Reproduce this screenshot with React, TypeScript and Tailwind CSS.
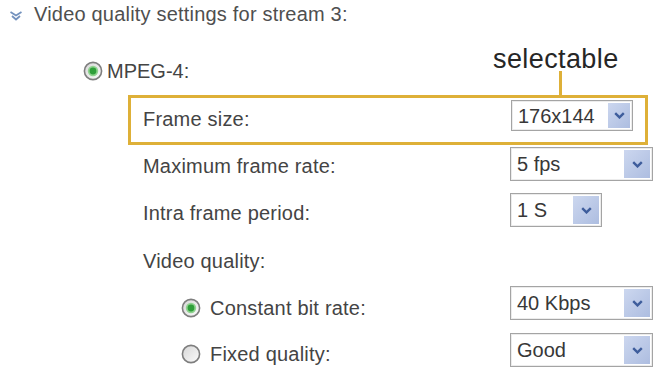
const Radio = ({ checked }: { checked?: boolean }) => (
    <svg width="20" height="20" viewBox="0 0 20 20">
        <defs>
            <linearGradient id={checked ? 'rg-on' : 'rg-off'} x1="0" y1="0" x2="1" y2="1">
                <stop offset="0" stopColor="#d6d6d6" />
                <stop offset="1" stopColor="#fbfbfb" />
            </linearGradient>
        </defs>
        <circle cx="10" cy="10" r="8.6" fill={`url(#${checked ? 'rg-on' : 'rg-off'})`} stroke="#7e7e7e" strokeWidth="1.6" />
        {checked && (
            <>
                <circle cx="10" cy="10" r="5.2" fill="#8fd38f" />
                <circle cx="10" cy="10" r="3.4" fill="#2f9f3a" />
            </>
        )}
    </svg>
);

const Select = ({
    value,
    width,
    height = 34,
    button = 26,
    top = 0,
}: {
    value: string;
    width: string;
    height?: number;
    button?: number;
    top?: number;
}) => (
    <div
        className={`${width} flex items-center justify-between border border-[#a4a4a4] bg-white pl-[6px] pr-[2px] text-[#383838] shadow-[inset_0_0_0_1px_#ececec]`}
        style={{ height, marginTop: top }}
    >
        <span>{value}</span>
        <span
            className="flex items-center justify-center bg-gradient-to-br from-[#ccd7ef] to-[#adbde0]"
            style={{ width: button, height: height - 6 }}
        >
            <svg width="11" height="7" viewBox="0 0 11 7">
                <path d="M1.2 1.2 L5.5 5.4 L9.8 1.2" fill="none" stroke="#3e5d9c" strokeWidth="2.4" />
            </svg>
        </span>
    </div>
);

type RowProps = {
    label: string;
    indent: string;
    radio?: 'on' | 'off';
    pad: string;
    select?: React.ReactNode;
};

const Row = ({ label, indent, radio, pad, select }: RowProps) => (
    <div className="flex h-[47px] items-start">
        <div className={`flex w-[510px] shrink-0 items-start ${indent} ${pad}`}>
            {radio && (
                <span className="mr-[9px] flex h-6 items-center">
                    <Radio checked={radio === 'on'} />
                </span>
            )}
            <span className="tracking-[0.2px]">{label}</span>
        </div>
        {select}
    </div>
);

const App = () => {
    return (
        <div className="h-[371px] w-[662px] overflow-hidden bg-white font-['Liberation_Sans',Arial,sans-serif] text-[20px] leading-6 text-[#444]">
            {/* Section header */}
            <div className="flex h-[48px] items-start pt-[2px] text-[#4f4f4f]">
                <span className="flex w-[34px] shrink-0 pl-[9px] pt-[9px]">
                    <svg width="14" height="10" viewBox="0 0 14 10">
                        <path d="M1.5 1 L7 4.5 L12.5 1" fill="none" stroke="#7391bd" strokeWidth="1.8" />
                        <path d="M3 5 L7 8.5 L11 5" fill="none" stroke="#7391bd" strokeWidth="1.8" />
                    </svg>
                </span>
                <span className="tracking-[0.2px]">Video quality settings for stream 3:</span>
            </div>

            {/* Codec choice */}
            <div className="flex h-[47px] items-start pl-[83px] pt-[11px]">
                <span className="mr-[4px] flex h-6 items-center">
                    <Radio checked />
                </span>
                <span>MPEG-4:</span>
            </div>

            {/* Highlighted row with callout */}
            <div className="relative ml-[128px] flex h-[50px] w-[520px] items-start border-[3px] border-[#deb038] pl-[12px]">
                <span className="absolute left-[362px] top-[-52px] text-[27px] leading-[27px] tracking-[0.4px] text-[#262626]">
                    selectable
                </span>
                <span className="absolute left-[428px] top-[-27px] h-[25px] w-[3px] bg-[#deb038]" />
                <div className="w-[368px] shrink-0 pt-[9px] tracking-[0.2px]">Frame size:</div>
                <Select value="176x144" width="w-[122px]" height={31} button={22} top={2} />
            </div>

            <Row
                label="Maximum frame rate:"
                indent="pl-[143px]"
                pad="pt-[9px]"
                select={<Select value="5 fps" width="w-[143px]" top={2} />}
            />
            <Row
                label="Intra frame period:"
                indent="pl-[143px]"
                pad="pt-[9px]"
                select={<Select value="1 S" width="w-[92px]" top={1} />}
            />
            <Row label="Video quality:" indent="pl-[143px]" pad="pt-[10px]" />
            <Row
                label="Constant bit rate:"
                indent="pl-[181px]"
                radio="on"
                pad="pt-[10px]"
                select={<Select value="40 Kbps" width="w-[143px]" />}
            />
            <Row
                label="Fixed quality:"
                indent="pl-[181px]"
                radio="off"
                pad="pt-[9px]"
                select={<Select value="Good" width="w-[143px]" />}
            />
        </div>
    );
};

export default App;
